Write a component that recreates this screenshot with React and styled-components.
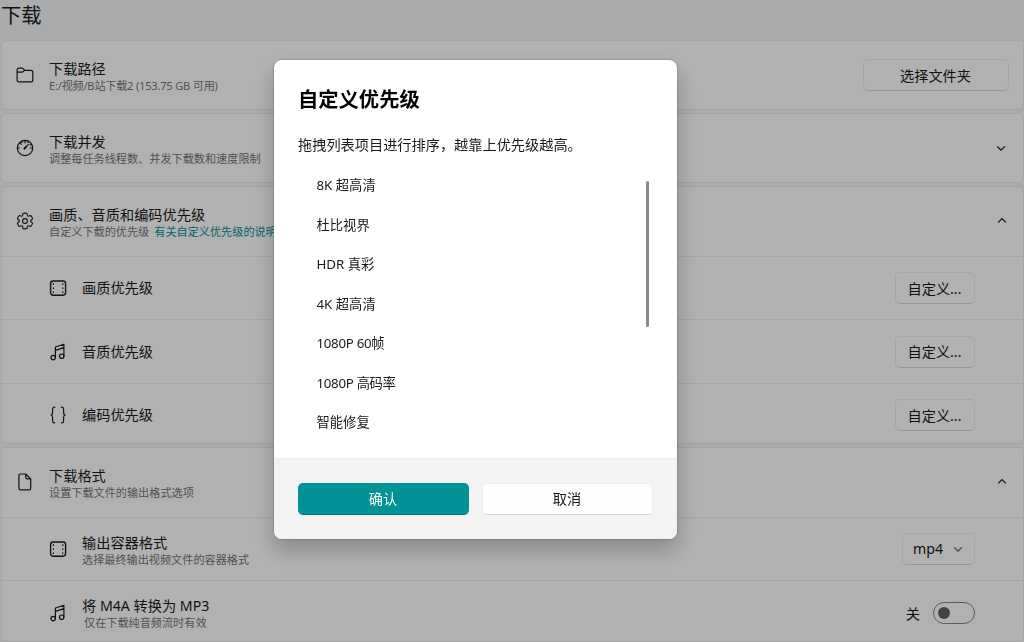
import React from 'react'
import styled, { createGlobalStyle } from 'styled-components'

const GlobalStyle = createGlobalStyle`
  * {
    box-sizing: border-box;
  }

  body {
    margin: 0;
    overflow: hidden;
    color: #1a1a1a;
    font-size: 14.2px;
    font-family: 'Noto Sans', 'Noto Sans CJK SC', sans-serif;
    background: #f3f5f5;
  }

  button {
    font: inherit;
  }
`

const Page = styled.main`
  height: 642px;
  padding-left: 1px;
  overflow: hidden;
  background: linear-gradient(180deg, #f2f5f7, #f4f6f6 20%);
`

const PageTitle = styled.h1`
  display: flex;
  align-items: center;
  height: 40px;
  margin: 0;
  padding-bottom: 12px;
  font-weight: 400;
  font-size: 20.3px;
`

const CardList = styled.div`
  display: flex;
  flex-direction: column;
  gap: 3px;
`

const Card = styled.section`
  border: 1px solid #e9eded;
  border-radius: 5px;
  background: #fefefe;
`

const CardHeader = styled.div`
  display: flex;
  align-items: center;
  height: ${(p) => p.$height || 68}px;
  padding: 0 ${(p) => p.$right || 16}px ${(p) => p.$bottom || 0}px 13px;
`

const Row = styled.div`
  display: flex;
  align-items: center;
  height: ${(p) => p.$height}px;
  padding: ${(p) => p.$top || 0}px 48px 0 46px;
  border-top: 1px solid #ececec;
`

const IconBox = styled.span`
  display: flex;
  flex: none;
  width: 20px;
  margin-right: 14px;
`

const Labels = styled.div`
  display: flex;
  flex: 1;
  flex-direction: column;
  min-width: 0;
  padding-top: ${(p) => p.$top || 0}px;
  white-space: nowrap;
`

const Label = styled.span`
  line-height: 18px;
`

const Hint = styled.span`
  color: #747474;
  font-size: 11.15px;
  line-height: 16px;
  letter-spacing: ${(p) => (p.$tight ? '-0.23px' : 'normal')};
  ${(p) => p.$indent && 'padding-left: 2px;'}

  a {
    margin-left: 5px;
    color: #008f94;
    text-decoration: none;
  }
`

const Button = styled.button`
  display: flex;
  flex: none;
  align-items: center;
  justify-content: center;
  gap: 10px;
  width: ${(p) => p.$width}px;
  height: 32px;
  padding: 0 1px 1px 0;
  color: #1a1a1a;
  border: 1px solid #ededed;
  border-bottom-color: #d6d6d6;
  border-radius: 5px;
  background: #fefefe;
`

const PrimaryButton = styled(Button)`
  color: #fff;
  border-color: #009297;
  border-bottom-color: #00777b;
  background: #009297;
`

const SwitchText = styled.span`
  margin-right: 13px;
`

const Switch = styled.span`
  display: flex;
  align-items: center;
  width: 42px;
  height: 22px;
  padding-left: 4px;
  border: 1px solid #868686;
  border-radius: 11px;
`

const Knob = styled.span`
  width: 12px;
  height: 12px;
  border-radius: 50%;
  background: #606060;
`

const Overlay = styled.div`
  position: fixed;
  inset: 0;
  display: flex;
  align-items: flex-start;
  justify-content: center;
  padding: 60.4px 73px 0 0;
  background: rgba(0, 0, 0, 0.3);
`

const Dialog = styled.div`
  display: flex;
  flex-direction: column;
  width: 403px;
  height: 479px;
  overflow: hidden;
  border-radius: 8px;
  background: #fff;
  box-shadow: 0 0 1px 1px rgba(0, 0, 0, 0.13), 0 11px 22px rgba(0, 0, 0, 0.24);
`

const DialogBody = styled.div`
  flex: 1;
  padding: 22.6px 28px 0 24px;
`

const DialogTitle = styled.h2`
  margin: 0;
  color: #000;
  font-weight: 700;
  font-size: 20.3px;
  line-height: 32px;
`

const DialogText = styled.p`
  margin: 19px 0 0;
  line-height: 22px;
  white-space: nowrap;
`

const ScrollArea = styled.div`
  display: flex;
  justify-content: space-between;
  margin-top: 9px;
`

const List = styled.ul`
  margin: 0;
  padding: 0 0 0 18.5px;
  font-size: 13.3px;
  list-style: none;
`

const ListItem = styled.li`
  display: flex;
  align-items: center;
  height: 39.5px;
  letter-spacing: ${(p) => (p.$tight ? '-0.3px' : 'normal')};
`

const Thumb = styled.span`
  width: 3px;
  height: 146px;
  margin-top: 16px;
  border-radius: 2px;
  background: #8a8a8a;
`

const DialogFooter = styled.div`
  display: flex;
  gap: 13px;
  height: 81px;
  padding: 23.6px 24px 0;
  border-top: 1px solid #ebebeb;
  background: #f3f3f3;
`

const PATHS = {
  folder: (
    <path d="M2.1 6.2V5c0-1 .9-1.9 2-1.9h3c.4 0 .8.2 1.1.5l1.4 1.5c.2.2.4.3.7.3h5.6c1 0 1.9.9 1.9 1.9v7.6c0 1-.9 1.9-1.9 1.9H4.1c-1.1 0-2-.9-2-1.9V6.2Zm0 1h5c.4 0 .8-.2 1.1-.5l1.3-1.3" />
  ),
  gauge: (
    <>
      <circle cx="10" cy="10" r="7.7" />
      <path d="M10 2.5v2.3M4.7 4.7l1.6 1.6M6.6 3.2l.6 1.2M13.4 3.2l-.6 1.2M2.5 10h2.2M15.3 10h2.2M15.2 6.8l1.3-.5M9.4 10.6l4-4.2" />
      <path d="m9.4 10.6 1.6-1.7" strokeWidth="2" />
    </>
  ),
  gear: (
    <g transform="translate(.7 .7) scale(.93)">
      <circle cx="10" cy="10" r="2.6" />
      <path d="M1.91 7.38A8.5 8.5 0 0 1 3.7 4.3a.5.5 0 0 1 .54-.13l1.92.68a1 1 0 0 0 1.32-.76l.36-2a.5.5 0 0 1 .4-.4 8.53 8.53 0 0 1 3.55 0c.2.04.35.2.38.4l.37 2a1 1 0 0 0 1.32.76l1.92-.68a.5.5 0 0 1 .54.13 8.53 8.53 0 0 1 1.78 3.08c.06.2 0 .4-.15.54l-1.56 1.32a1 1 0 0 0 0 1.52l1.56 1.32a.5.5 0 0 1 .15.54 8.54 8.54 0 0 1-1.78 3.08.5.5 0 0 1-.54.13l-1.92-.68a1 1 0 0 0-1.32.76l-.37 2a.5.5 0 0 1-.38.4 8.53 8.53 0 0 1-3.56 0 .5.5 0 0 1-.39-.4l-.36-2a1 1 0 0 0-1.32-.76l-1.92.68a.5.5 0 0 1-.54-.13 8.53 8.53 0 0 1-1.78-3.08.5.5 0 0 1 .15-.54l1.56-1.32a1 1 0 0 0 0-1.52L2.06 7.92a.5.5 0 0 1-.15-.54Z" />
    </g>
  ),
  film: (
    <>
      <rect x="2.6" y="3" width="15" height="14.2" rx="2.6" strokeWidth="1.4" />
      <path d="M5.4 5.7v.7M5.4 9.8v.7M5.4 13.8v.7M14.8 5.7v.7M14.8 9.8v.7M14.8 13.8v.7" />
    </>
  ),
  music: (
    <>
      <circle cx="5.2" cy="15.6" r="2.2" />
      <circle cx="13.7" cy="14.2" r="2.2" />
      <path d="M7.4 15.6V5l8.5-2.8v12M7.4 8.4l8.5-2.8" />
    </>
  ),
  braces: (
    <path d="M6.8 2.2h-.4c-1.1 0-1.8.8-1.8 1.9v3.4c0 1.4-.6 2.3-1.5 2.5.9.2 1.5 1.1 1.5 2.5v3.4c0 1.1.7 1.9 1.8 1.9h.4M13.4 2.2h.4c1.1 0 1.8.8 1.8 1.9v3.4c0 1.4.6 2.3 1.5 2.5-.9.2-1.5 1.1-1.5 2.5v3.4c0 1.1-.7 1.9-1.8 1.9h-.4" />
  ),
  file: (
    <path d="M10.8 2H5.5c-.9 0-1.6.7-1.6 1.6v12.6c0 .9.7 1.6 1.6 1.6h8.6c.9 0 1.6-.7 1.6-1.6V6.9L10.8 2Zm0 0v3.5c0 .8.6 1.4 1.4 1.4h3.5" />
  ),
}

const Icon = ({ name }) => (
  <svg
    width="20"
    height="20"
    viewBox="0 0 20 20"
    fill="none"
    stroke="#1a1a1a"
    strokeWidth="1.2"
    strokeLinecap="round"
    strokeLinejoin="round"
  >
    {PATHS[name]}
  </svg>
)

const Chevron = ({ up, color = '#1a1a1a' }) => (
  <svg width="10" height="10" viewBox="0 0 10 10" fill="none" stroke={color} strokeWidth="1.3">
    <path d={up ? 'M1.2 6.4 5 2.6l3.8 3.8' : 'M1.2 3.4 5 7.2l3.8-3.8'} />
  </svg>
)

const priorities = [
  { icon: 'film', name: '画质优先级', height: 63, top: 0 },
  { icon: 'music', name: '音质优先级', height: 64, top: 0 },
  { icon: 'braces', name: '编码优先级', height: 60, top: 3 },
]

const qualities = [
  { name: '8K 超高清' },
  { name: '杜比视界' },
  { name: 'HDR 真彩' },
  { name: '4K 超高清' },
  { name: '1080P 60帧', tight: true },
  { name: '1080P 高码率', tight: true },
  { name: '智能修复' },
]

const Setting = ({ icon, title, hint, top, indent, tight }) => (
  <>
    <IconBox>
      <Icon name={icon} />
    </IconBox>
    <Labels $top={top}>
      <Label>{title}</Label>
      {hint && (
        <Hint $indent={indent} $tight={tight}>
          {hint}
        </Hint>
      )}
    </Labels>
  </>
)

export default function App() {
  return (
    <>
      <GlobalStyle />
      <Page>
        <PageTitle>下载</PageTitle>
        <CardList>
          <Card>
            <CardHeader $right={14}>
              <Setting
                icon="folder"
                title="下载路径"
                hint="E:/视频/B站下载2 (153.75 GB 可用)"
                top={4}
                tight
              />
              <Button $width={146}>选择文件夹</Button>
            </CardHeader>
          </Card>
          <Card>
            <CardHeader $right={17}>
              <Setting
                icon="gauge"
                title="下载并发"
                hint="调整每任务线程数、并发下载数和速度限制"
                top={4}
              />
              <Chevron />
            </CardHeader>
          </Card>
          <Card>
            <CardHeader $height={69} $bottom={1}>
              <Setting
                icon="gear"
                title="画质、音质和编码优先级"
                hint={
                  <>
                    自定义下载的优先级
                    <a href="#priority">有关自定义优先级的说明</a>
                  </>
                }
                top={3}
              />
              <Chevron up />
            </CardHeader>
            {priorities.map(({ icon, name, height, top }) => (
              <Row key={name} $height={height} $top={top}>
                <Setting icon={icon} title={name} />
                <Button $width={80}>自定义...</Button>
              </Row>
            ))}
          </Card>
          <Card>
            <CardHeader $height={69} $bottom={1}>
              <Setting icon="file" title="下载格式" hint="设置下载文件的输出格式选项" top={3} />
              <Chevron up />
            </CardHeader>
            <Row $height={63}>
              <Setting
                icon="film"
                title="输出容器格式"
                hint="选择最终输出视频文件的容器格式"
                top={4}
              />
              <Button $width={73}>
                mp4
                <Chevron color="#606060" />
              </Button>
            </Row>
            <Row $height={61} $top={4}>
              <Setting icon="music" title="将 M4A 转换为 MP3" hint="仅在下载纯音频流时有效" top={1} indent />
              <SwitchText>关</SwitchText>
              <Switch>
                <Knob />
              </Switch>
            </Row>
          </Card>
        </CardList>
      </Page>
      <Overlay>
        <Dialog role="dialog">
          <DialogBody>
            <DialogTitle>自定义优先级</DialogTitle>
            <DialogText>拖拽列表项目进行排序，越靠上优先级越高。</DialogText>
            <ScrollArea>
              <List>
                {qualities.map(({ name, tight }) => (
                  <ListItem key={name} $tight={tight}>
                    {name}
                  </ListItem>
                ))}
              </List>
              <Thumb />
            </ScrollArea>
          </DialogBody>
          <DialogFooter>
            <PrimaryButton $width={171}>确认</PrimaryButton>
            <Button $width={171}>取消</Button>
          </DialogFooter>
        </Dialog>
      </Overlay>
    </>
  )
}
